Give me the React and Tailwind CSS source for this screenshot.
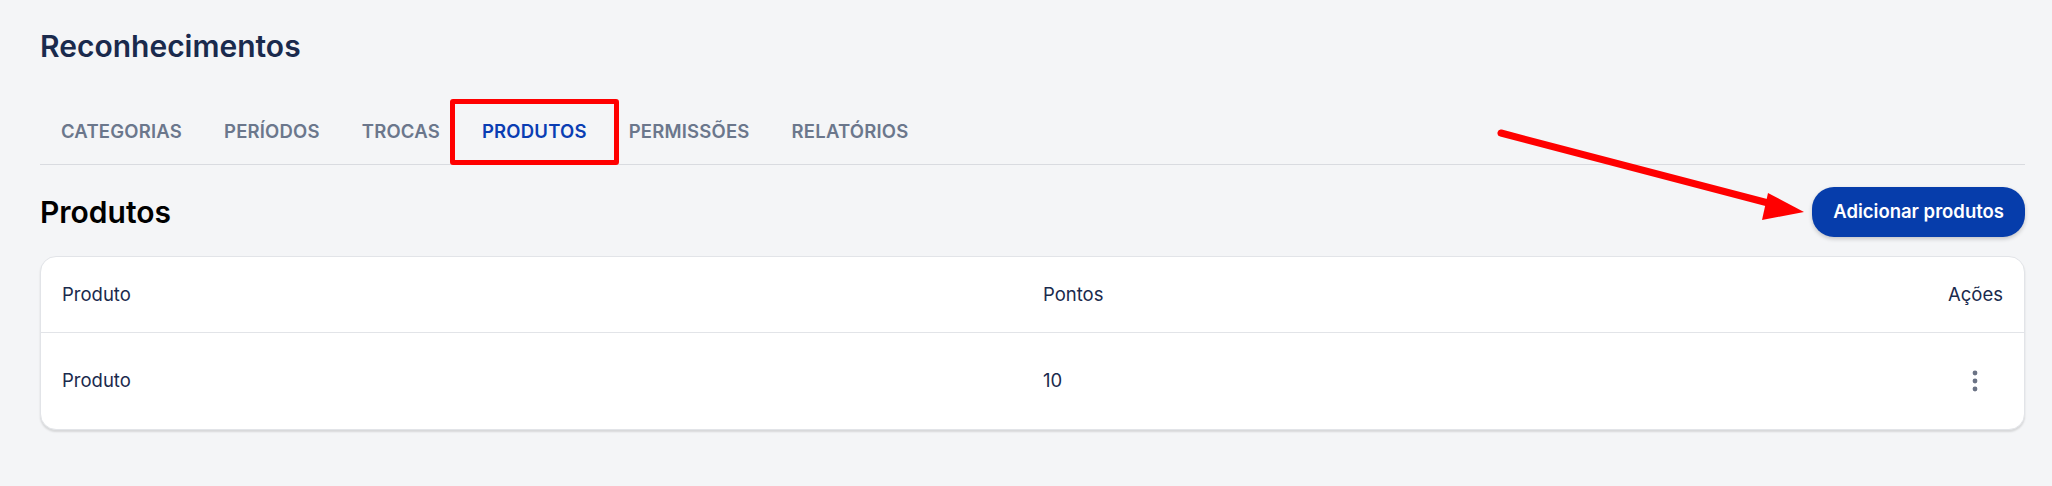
import React from 'react';

const tabs = ['CATEGORIAS', 'PERÍODOS', 'TROCAS', 'PRODUTOS', 'PERMISSÕES', 'RELATÓRIOS'];

function Kebab() {
  return (
    <svg width="6" height="22" viewBox="0 0 6 22" className="text-[#6b7385]">
      <circle cx="3" cy="3" r="2.4" fill="currentColor" />
      <circle cx="3" cy="11" r="2.4" fill="currentColor" />
      <circle cx="3" cy="19" r="2.4" fill="currentColor" />
    </svg>
  );
}

export default function App() {
  return (
    <div className="relative min-h-[486px] bg-[#f4f5f7] pl-10 pr-[27px] pt-[28px] font-['Inter',sans-serif]">
      <h1 className="text-[30px] font-semibold leading-[36px] text-[#1a2a4d]">Reconhecimentos</h1>

      <nav className="mt-[34px] flex border-b border-[#d9dbe0]">
        {tabs.map((t) => {
          const active = t === 'PRODUTOS';
          return (
            <div
              key={t}
              className={
                'relative px-[21px] py-[21px] text-[18.5px] font-semibold leading-6 tracking-[0.2px] ' +
                (active ? 'text-[#0a3db3]' : 'text-[#6b778c]')
              }
            >
              {t}
              {active && (
                <span className="absolute -left-[11px] -right-[11px] top-[1px] -bottom-[1px] rounded-[3px] border-[5px] border-[#ff0000]" />
              )}
            </div>
          );
        })}
      </nav>

      <div className="mt-[22px] flex items-center justify-between">
        <h2 className="text-[30px] font-semibold leading-9 text-black">Produtos</h2>
        <button className="h-[50px] rounded-[22px] bg-[#063dab] px-[21px] text-[18.5px] font-semibold text-white shadow-[0_2px_4px_rgba(0,0,0,0.2)]">
          Adicionar produtos
        </button>
      </div>

      <div className="mt-[19px] overflow-hidden rounded-2xl border border-[#e2e4e8] bg-white shadow-[0_2px_2px_rgba(0,0,0,0.12)]">
        <div className="grid h-[76px] grid-cols-[960px_1fr_auto] items-center border-b border-[#e2e4e8] px-[21px] text-[18.5px] text-[#1a2a4d]">
          <div>Produto</div>
          <div className="pl-[21px]">Pontos</div>
          <div>Ações</div>
        </div>
        <div className="grid h-[96px] grid-cols-[960px_1fr_auto] items-center px-[21px] text-[18.5px] text-[#1a2a4d]">
          <div>Produto</div>
          <div className="pl-[21px]">10</div>
          <div className="flex w-[56px] justify-center">
            <Kebab />
          </div>
        </div>
      </div>

      <svg className="pointer-events-none absolute left-0 top-0" width="2052" height="486">
        <line x1="1501" y1="133" x2="1772" y2="204" stroke="#ff0000" strokeWidth="7" strokeLinecap="round" />
        <polygon points="1804,212 1768,193 1762,220" fill="#ff0000" />
      </svg>
    </div>
  );
}
